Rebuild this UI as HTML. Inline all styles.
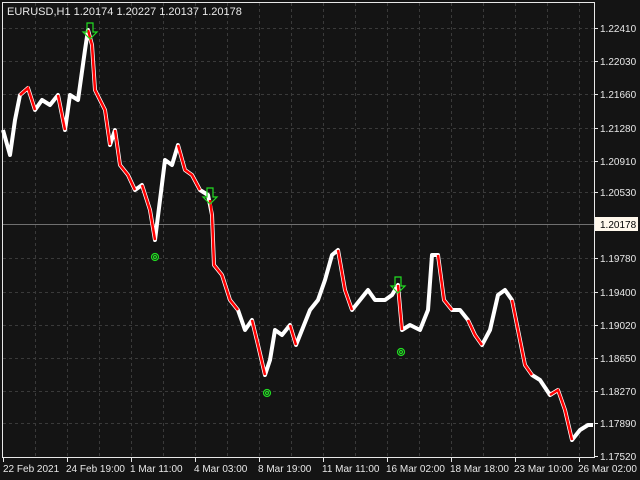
<!DOCTYPE html>
<html><head><meta charset="utf-8"><style>
html,body{margin:0;padding:0;background:#141414;width:640px;height:480px;overflow:hidden}
svg{display:block}
text{font-family:"Liberation Sans",sans-serif;font-size:10px;fill:#e8e8e8}
</style></head><body>
<svg width="640" height="480" viewBox="0 0 640 480">
<rect width="640" height="480" fill="#141414"/>
<g stroke="#3a3a3a" stroke-width="1" stroke-dasharray="3,3">
<path d="M3 28.5H594M3 61.5H594M3 94.5H594M3 128.5H594M3 161.5H594M3 192.5H594M3 258.5H594M3 292.5H594M3 325.5H594M3 358.5H594M3 391.5H594M3 423.5H594"/>
<path d="M35.5 3V457M67.5 3V457M99.5 3V457M131.5 3V457M163.5 3V457M195.5 3V457M227.5 3V457M259.5 3V457M291.5 3V457M323.5 3V457M355.5 3V457M387.5 3V457M419.5 3V457M451.5 3V457M483.5 3V457M515.5 3V457M547.5 3V457M579.5 3V457"/>
</g>
<line x1="3" y1="224.5" x2="594" y2="224.5" stroke="#707070"/>
<rect x="2.5" y="2.5" width="592" height="455" fill="none" stroke="#e8e8e8"/>
<g stroke="#e8e8e8">
<path d="M594 28.5h4M594 61.5h4M594 94.5h4M594 128.5h4M594 161.5h4M594 192.5h4M594 258.5h4M594 292.5h4M594 325.5h4M594 358.5h4M594 391.5h4M594 423.5h4M594 456.5h4"/>
<path d="M3.5 458v4M67.5 458v4M131.5 458v4M195.5 458v4M259.5 458v4M323.5 458v4M387.5 458v4M451.5 458v4M515.5 458v4M579.5 458v4"/>
</g>
<polyline fill="none" stroke="#ffffff" stroke-width="4" stroke-linejoin="round" points="3,130 10,155 15,120 20,95 28,88 35,110 42,100 50,105 58,95 65,130 70,95 78,100 85,50 88,30 92,45 95,90 100,100 105,110 110,145 115,130 120,165 128,175 135,190 142,185 150,210 155,240 160,200 165,160 172,165 178,145 185,170 192,175 200,190 208,195 212,215 214,265 222,275 230,300 238,310 245,330 252,320 258,345 265,375 270,360 275,330 282,335 290,325 296,345 302,330 310,310 318,300 325,280 332,255 338,250 345,290 352,310 360,300 368,290 375,300 385,300 392,295 398,285 402,330 410,325 420,330 428,310 432,255 438,255 444,300 452,310 460,310 468,320 475,335 482,345 490,330 498,295 505,290 512,300 518,330 525,365 532,375 540,380 550,395 558,390 565,410 572,440 580,430 588,425 593,425"/>
<g fill="none" stroke="#ff0000" stroke-width="2.5">
<polyline points="20,95 28,88 35,110"/><polyline points="58,95 65,130"/><polyline points="88,30 92,45 95,90 100,100 105,110 110,145"/><polyline points="115,130 120,165 128,175 135,190"/><polyline points="142,185 150,210 155,240"/><polyline points="178,145 185,170 192,175 200,190"/><polyline points="210,200 212,215 214,265 222,275 230,300 238,310"/><polyline points="252,320 258,345 265,375"/><polyline points="290,325 296,345"/><polyline points="338,250 345,290 352,310"/><polyline points="398,285 402,330"/><polyline points="438,255 444,300 452,310"/><polyline points="468,320 475,335 482,345"/><polyline points="512,300 518,330 525,365 532,375"/><polyline points="550,395 558,390 565,410 572,440"/>
</g>
<g fill="none" stroke="#22dd22" stroke-width="1.2">
<path d="M87 23h6v9h4l-7 7-7-7h4z"/>
<path d="M207 188h6v9h4l-7 7-7-7h4z"/>
<path d="M395 277h6v9h4l-7 7-7-7h4z"/>
<circle cx="155" cy="257" r="3.5"/><circle cx="155" cy="257" r="1.5"/>
<circle cx="267" cy="393" r="3.5"/><circle cx="267" cy="393" r="1.5"/>
<circle cx="401" cy="352" r="3.5"/><circle cx="401" cy="352" r="1.5"/>
</g>
<text x="7" y="15" style="font-size:11px">EURUSD,H1  1.20174 1.20227 1.20137 1.20178</text>
<g>
<text x="600" y="32">1.22410</text><text x="600" y="65">1.22030</text><text x="600" y="98">1.21660</text><text x="600" y="132">1.21280</text><text x="600" y="165">1.20910</text><text x="600" y="196">1.20530</text><text x="600" y="262">1.19780</text><text x="600" y="296">1.19400</text><text x="600" y="329">1.19020</text><text x="600" y="362">1.18650</text><text x="600" y="395">1.18270</text><text x="600" y="427">1.17890</text><text x="600" y="460">1.17520</text>
</g>
<rect x="595" y="217" width="43" height="14" fill="#fff8ec"/>
<text x="600" y="228" style="fill:#000">1.20178</text>
<g>
<text x="3" y="472">22 Feb 2021</text><text x="66" y="472">24 Feb 19:00</text><text x="130" y="472">1 Mar 11:00</text><text x="194" y="472">4 Mar 03:00</text><text x="258" y="472">8 Mar 19:00</text><text x="322" y="472">11 Mar 11:00</text><text x="386" y="472">16 Mar 02:00</text><text x="450" y="472">18 Mar 18:00</text><text x="514" y="472">23 Mar 10:00</text><text x="578" y="472">26 Mar 02:00</text>
</g>
</svg>
</body></html>
